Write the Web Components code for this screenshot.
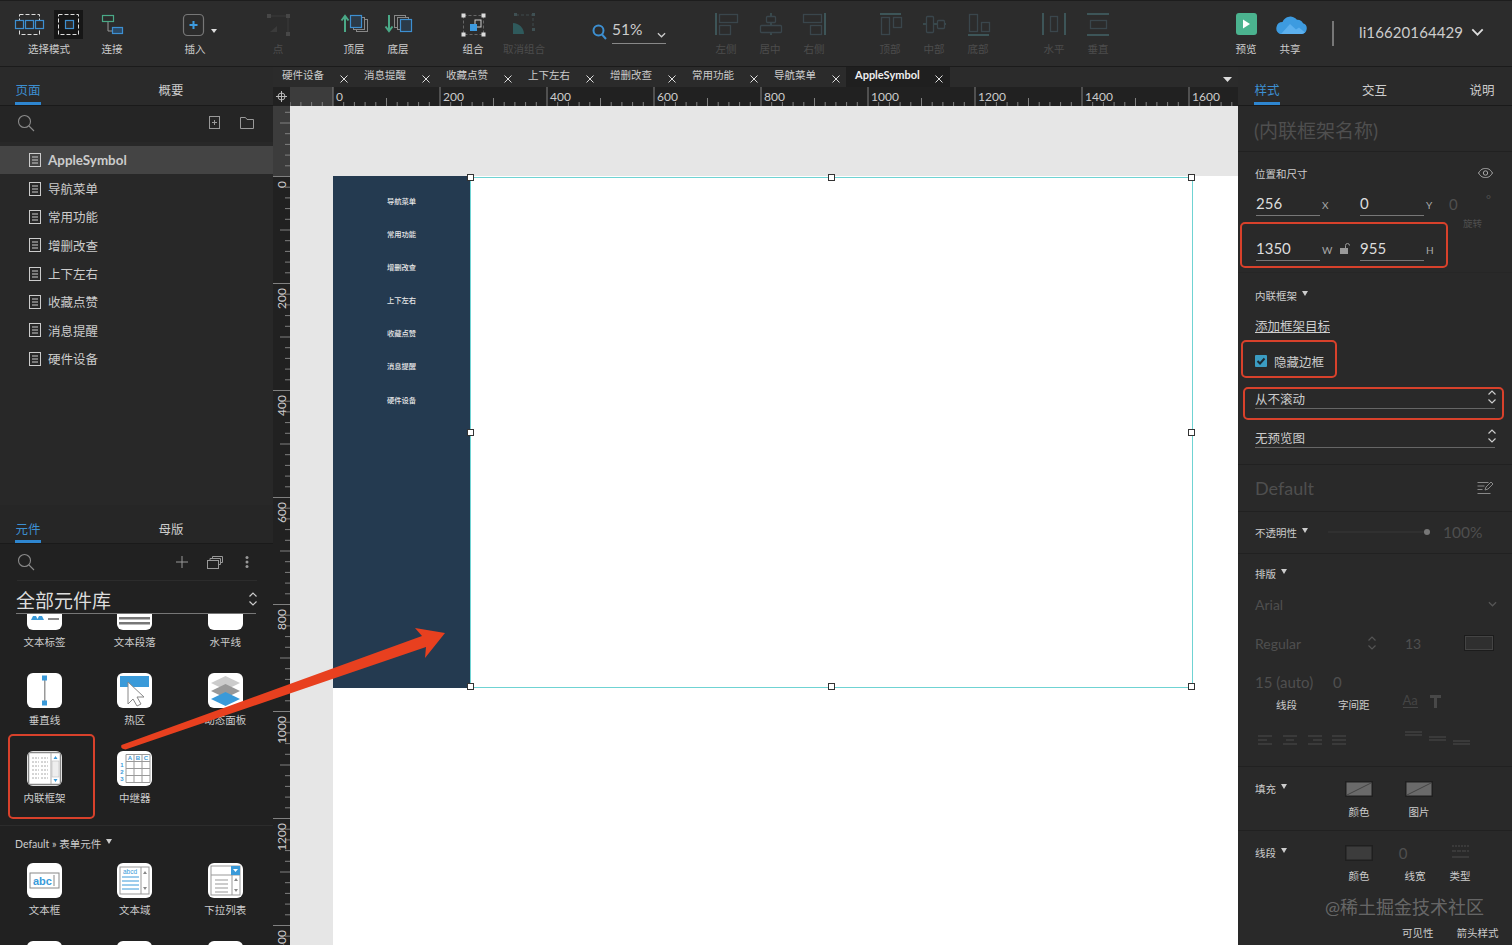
<!DOCTYPE html>
<html lang="zh">
<head>
<meta charset="utf-8">
<title>AppleSymbol</title>
<style>
  html, body { margin: 0; height: 100%; background: #222; overflow: hidden; }
</style>
</head>
<body>
<axure-app>
  <top-bar slot="top"></top-bar>
  <div slot="left" style="display:contents">
    <page-panel></page-panel>
    <lib-panel></lib-panel>
  </div>
  <editor-area slot="center"></editor-area>
  <style-panel slot="right"></style-panel>
</axure-app>
<annotation-layer></annotation-layer>

<script>
const SANS = '"Lato", "Noto Sans CJK SC", sans-serif';
const updown = '<svg width="10" height="16" viewBox="0 0 10 16" fill="none" stroke="#ccc" stroke-width="1.2"><path d="M1.5 5.5 5 2l3.5 3.5M1.5 10.5 5 14l3.5-3.5"/></svg>';
const chevron = (c = '#ccc', w = 10, h = 6) => `<svg width="${w}" height="${h}" viewBox="0 0 10 6" fill="none" stroke="${c}" stroke-width="1.4"><path d="M1 1l4 4 4-4"/></svg>`;
const caret = '<svg width="6" height="5" viewBox="0 0 6 5" style="margin-left:5px;margin-top:-3px"><path d="M0 0h6L3 5z" fill="#ccc"/></svg>';
const searchIcon = '<svg width="18" height="18" viewBox="0 0 18 18" fill="none" stroke="#8a8a8a" stroke-width="1.1"><circle cx="7.5" cy="7.5" r="6"/><path d="M12 12l5 5"/></svg>';

const DIM = '#3d5558', DIM2 = '#3a464c';
const TOOL_ICONS = {
  selectMode: `<rect x="44" y="0" width="29" height="29" fill="#161616"/>
    <g fill="none" stroke="#ddd" stroke-dasharray="4 2"><rect x="9.5" y="4.5" width="20" height="20"/><rect x="48.5" y="4.5" width="20" height="20"/></g>
    <g fill="#2b2b2b" stroke="#3d8fd1" stroke-width="1.2"><rect x="5.5" y="10.5" width="8" height="8"/><rect x="15.5" y="10.5" width="8" height="8"/><rect x="25.5" y="10.5" width="8" height="8"/><rect x="55.5" y="10.5" width="8" height="8"/></g>`,
  connect: `<path d="M18 11v10h5" fill="none" stroke="#999"/><rect x="12.5" y="5.5" width="11" height="6" fill="#2b2b2b" stroke="#4aa987" stroke-width="1.2"/><rect x="22.5" y="17.5" width="10" height="6" fill="#2b4a66" stroke="#3d8fd1" stroke-width="1.2"/>`,
  insert: `<rect x="10.5" y="4.5" width="20" height="21" rx="4" fill="none" stroke="#777" stroke-width="1.2"/><path d="M20.5 11v8M16.5 15h8" stroke="#3d9be0" stroke-width="2"/><path d="M38 19h6l-3 4z" fill="#ddd"/>`,
  point: `<path d="M13 6h19v18" fill="none" stroke="#3b3b3b"/><path d="M14 22l7-6v6z" fill="#3b3b3b"/><g fill="#474747"><rect x="11" y="4" width="4" height="4"/><rect x="30" y="4" width="4" height="4"/><rect x="30" y="22" width="4" height="4"/></g>`,
  layerTop: `<path d="M13 22V7M9.5 10.5 13 6l3.500 4.500" fill="none" stroke="#4aa987" stroke-width="2"/><g fill="#2b2b2b" stroke="#888"><rect x="24.500" y="9.500" width="11" height="12"/><rect x="21.500" y="7.500" width="11" height="12"/></g><rect x="18.500" y="5.500" width="11" height="12" fill="#2b3a48" stroke="#3d8fd1" stroke-width="1.2"/>`,
  layerBottom: `<path d="M13 5v15M9.500 16.500 13 21l3.500-4.500" fill="none" stroke="#4aa987" stroke-width="2"/><g fill="#2b2b2b" stroke="#888"><rect x="18.500" y="5.500" width="11" height="12"/><rect x="21.500" y="7.500" width="11" height="12"/></g><rect x="24.500" y="9.500" width="11" height="12" fill="#2b3a48" stroke="#3d8fd1" stroke-width="1.2"/>`,
  group: `<rect x="12.500" y="5.500" width="20" height="19" fill="none" stroke="#666" stroke-dasharray="3 2"/><rect x="24" y="10" width="6" height="7" fill="none" stroke="#ccc"/><rect x="19" y="14" width="7" height="7" fill="#3d9be0"/><g fill="#ddd"><rect x="10.500" y="3.500" width="4" height="4"/><rect x="30.500" y="3.500" width="4" height="4"/><rect x="10.500" y="22.500" width="4" height="4"/><rect x="30.500" y="22.500" width="4" height="4"/></g>`,
  ungroup: `<path d="M11 24V13c6 0 11 5 11 11z" fill="#2f5a5c"/><path d="M14 5h17v14" fill="none" stroke="#3f4a4c" stroke-dasharray="3 2"/><g fill="#3f5053"><rect x="12" y="3" width="3" height="3"/><rect x="30" y="3" width="3" height="3"/><rect x="30" y="18" width="3" height="3"/></g>`,
  alignLeft: `<path d="M12 3v22" stroke="${DIM}" stroke-width="2"/><g fill="none" stroke="${DIM2}" stroke-width="1.3"><rect x="15.500" y="4.500" width="18" height="8"/><rect x="15.500" y="15.500" width="11" height="9"/></g>`,
  alignCenter: `<path d="M23 3v22" stroke="${DIM}" stroke-width="1.500"/><g fill="#2b2b2b" stroke="${DIM2}" stroke-width="1.3"><rect x="18.500" y="6.500" width="9" height="6" rx="1"/><rect x="12.500" y="15.500" width="21" height="7" rx="1"/></g>`,
  alignRight: `<path d="M33 3v22" stroke="${DIM}" stroke-width="2"/><g fill="none" stroke="${DIM2}" stroke-width="1.3"><rect x="11.500" y="4.500" width="18" height="8"/><rect x="18.500" y="15.500" width="11" height="9"/></g>`,
  alignTop: `<path d="M12 4h21" stroke="${DIM}" stroke-width="2"/><g fill="none" stroke="${DIM2}" stroke-width="1.3"><rect x="13.500" y="7.500" width="8" height="17"/><rect x="25.500" y="7.500" width="8" height="10"/></g>`,
  alignMiddle: `<path d="M11 14h23" stroke="${DIM}" stroke-width="1.500"/><g fill="#2b2b2b" stroke="${DIM2}" stroke-width="1.3"><rect x="14.500" y="6.500" width="7" height="16" rx="1"/><rect x="25.500" y="10.500" width="7" height="8" rx="1"/></g>`,
  alignBottom: `<path d="M12 25h21" stroke="${DIM}" stroke-width="2"/><g fill="none" stroke="${DIM2}" stroke-width="1.3"><rect x="13.500" y="4.500" width="8" height="17"/><rect x="25.500" y="12.500" width="8" height="9"/></g>`,
  distH: `<path d="M11 3v22M33 3v22" stroke="${DIM}" stroke-width="2"/><rect x="18.500" y="6.500" width="7" height="15" fill="none" stroke="${DIM2}" stroke-width="1.3"/>`,
  distV: `<path d="M11 4h22M11 25h22" stroke="${DIM}" stroke-width="2"/><rect x="14.500" y="10.500" width="16" height="8" fill="none" stroke="${DIM2}" stroke-width="1.3"/>`,
  preview: `<rect x="12" y="3" width="21" height="22" rx="3" fill="#4bb38f"/><path d="M19 9.500v9l7-4.500z" fill="#fff"/>`,
  share: `<path d="M12 24h21a5.500 5.500 0 0 0 2-10.700 6 6 0 0 0-6-3.600A8.500 8.500 0 0 0 14.500 12 6.300 6.300 0 0 0 12 24z" fill="#3d9be0"/><path d="M13 24l9-10 6 5.500 3-2 6 5-3 1.500z" fill="#5cb0ee"/>`
};

const BLUE = '#3a9ad9';
const LIB_ICONS = {
  label: `<path d="M6 21h3l2 4H4zM12 21h3l2 4h-7z" fill="${BLUE}"/><rect x="21" y="23" width="11" height="2" fill="#888"/>`,
  para: `<rect x="2" y="22" width="31" height="2.500" fill="#777"/><rect x="2" y="27" width="31" height="2.500" fill="#777"/>`,
  hline: ``,
  vline: `<rect x="17" y="6" width="1.500" height="23" fill="#999"/><rect x="15" y="2.500" width="5" height="5" fill="${BLUE}"/><rect x="15" y="27.500" width="5" height="5" fill="${BLUE}"/>`,
  hot: `<rect x="3" y="3" width="29" height="11" fill="${BLUE}"/><path d="M11 9v22l5-5 4 7 4-2-4-7h7z" fill="#fff" stroke="#888"/>`,
  dynamic: `<path d="M17.500 3 32 10l-14.500 7L3 10z" fill="#ccc"/><path d="M17.500 11 32 18l-14.500 7L3 18z" fill="#999"/><path d="M17.500 19 32 26l-14.500 7L3 26z" fill="${BLUE}"/>`,
  frame: `<rect x="1.500" y="1.500" width="32" height="32" fill="none" stroke="#888" stroke-width="1.500"/><path d="M24 2v31" stroke="#aaa"/><path d="M5 7h7M14 7h7M5 11h7M14 11h7M5 15h7M14 15h7M5 19h7M14 19h7M5 23h7M14 23h7M5 27h7M14 27h7" stroke="#aaa" stroke-dasharray="2 1"/><rect x="25" y="10" width="7" height="16" fill="#eee" stroke="#bbb" stroke-width=".6"/><path d="M26.500 8l2-3 2 3zM26.500 28l2 3 2-3z" fill="${BLUE}"/>`,
  repeater: `<path d="M9 3.500h24v28H9zM9 10.500h24M9 17.500h24M9 24.500h24M17 3.500v28M25 3.500v28" fill="none" stroke="#999"/><g font-family="Liberation Sans" font-size="6" font-weight="700" fill="${BLUE}" text-anchor="middle"><text x="13" y="9">A</text><text x="21" y="9">B</text><text x="29" y="9">C</text><text x="5" y="16">1</text><text x="5" y="23">2</text><text x="5" y="30">3</text></g>`,
  textbox: `<rect x="3" y="10" width="29" height="15" fill="none" stroke="#888"/><text x="6" y="21.500" font-family="Liberation Sans" font-size="11" font-weight="700" fill="${BLUE}">abc</text><path d="M27 12v11" stroke="#888"/>`,
  textarea: `<rect x="3" y="4" width="29" height="27" fill="none" stroke="#999"/><text x="6" y="11" font-family="Liberation Sans" font-size="6.500" fill="${BLUE}">abcd</text><path d="M5 14h17M5 18h17M5 22h17M5 26h17" stroke="${BLUE}"/><path d="M24 4v27" stroke="#999"/><path d="M26 11l2-3 2 3zM26 24l2 3 2-3z" fill="#888"/>`,
  dropdown: `<rect x="3" y="3" width="29" height="29" fill="none" stroke="#999"/><path d="M3 12h29M24 12v20" stroke="#999"/><rect x="23" y="3" width="9" height="9" fill="${BLUE}"/><path d="M25 6h5l-2.500 3z" fill="#fff"/><path d="M7 17h13M7 21h13M7 25h13M7 29h13" stroke="#999"/><path d="M26 18l2-3 2 3zM26 26l2 3 2-3z" fill="#888"/>`,
  blank: ``
};

class BaseEl extends HTMLElement {
  connectedCallback() {
    if (!this.shadowRoot) this.attachShadow({ mode: 'open' });
    this.shadowRoot.innerHTML = this.markup();
  }
}

class AxureApp extends BaseEl {
  markup() {
    return `<style>
      :host { display: grid; grid-template-columns: 273px 965px 274px; grid-template-rows: 67px 878px; width: 1512px; height: 945px; font-family: ${SANS}; color: #ccc; overflow: hidden; }
      .top { grid-column: 1 / 4; }
      .left { display: flex; flex-direction: column; min-height: 0; }
    </style>
    <div class="top"><slot name="top"></slot></div>
    <div class="left"><slot name="left"></slot></div>
    <slot name="center"></slot>
    <slot name="right"></slot>`;
  }
}

class ToolBtn extends BaseEl {
  markup() {
    const w = this.getAttribute('w') || 44;
    const dim = this.hasAttribute('dim');
    return `<style>
      :host { display: flex; flex-direction: column; align-items: center; width: ${w}px; flex: none; }
      svg { display: block; }
      span { font-size: 10.5px; line-height: 14px; margin-top: 2px; white-space: nowrap; color: ${dim ? '#4c4c4c' : '#ccc'}; }
    </style>
    <svg width="${w}" height="30" viewBox="0 0 ${w} 30">${TOOL_ICONS[this.getAttribute('icon')]}</svg>
    <span>${this.getAttribute('label')}</span>`;
  }
}

class ZoomBox extends BaseEl {
  markup() {
    return `<style>
      :host { display: flex; width: 74px; flex: none; align-items: flex-start; padding-top: 13px; }
      .val { display: flex; justify-content: space-between; align-items: center; width: 54px; height: 20px; margin-left: 5px; border-bottom: 1px solid #888; font-size: 15.5px; color: #ccc; }
      .val span { margin-top: -8px; }
      .val svg { margin-top: 3px; }
      svg.mag { margin-top: 1px; }
    </style>
    <svg class="mag" width="15" height="16" viewBox="0 0 15 16" fill="none" stroke="#3d8fd1" stroke-width="2"><circle cx="6.500" cy="6.500" r="5"/><path d="M10 10.500l4 4.500"/></svg>
    <div class="val"><span>51%</span>${chevron('#ccc', 9, 6)}</div>`;
  }
}

class TopBar extends BaseEl {
  markup() {
    const t = (icon, label, ml = 0, extra = '') => `<tool-btn icon="${icon}" label="${label}" style="margin-left:${ml}px" ${extra}></tool-btn>`;
    return `<style>
      :host { display: flex; height: 67px; box-sizing: border-box; padding: 9px 0 0 10px; background: #2c2c2c; border-top: 1px solid #1d1d1d; border-bottom: 1px solid #1b1b1b; }
      .sep { width: 2px; height: 25px; background: #777; margin: 11px 0 0 20px; flex: none; }
      .user { display: flex; align-items: center; gap: 8px; height: 25px; margin: 9px 0 0 25px; font-size: 15px; letter-spacing: .1px; color: #ccc; white-space: nowrap; }
    </style>
    ${t('selectMode', '选择模式', 0, 'w="78"')}
    ${t('connect', '连接', 2)}
    ${t('insert', '插入', 39)}
    ${t('point', '点', 39, 'dim')}
    ${t('layerTop', '顶层', 32)}
    ${t('layerBottom', '底层')}
    ${t('group', '组合', 31)}
    ${t('ungroup', '取消组合', 7, 'dim')}
    <zoom-box style="margin-left:46px"></zoom-box>
    ${t('alignLeft', '左侧', 38, 'dim')}
    ${t('alignCenter', '居中', 0, 'dim')}
    ${t('alignRight', '右侧', 0, 'dim')}
    ${t('alignTop', '顶部', 32, 'dim')}
    ${t('alignMiddle', '中部', 0, 'dim')}
    ${t('alignBottom', '底部', 0, 'dim')}
    ${t('distH', '水平', 32, 'dim')}
    ${t('distV', '垂直', 0, 'dim')}
    ${t('preview', '预览', 104)}
    ${t('share', '共享')}
    <div class="sep"></div>
    <div class="user"><span>li16620164429</span>${chevron('#ddd', 13, 8)}</div>`;
  }
}

class PanelTabs extends BaseEl {
  markup() {
    return `<style>
      :host { display: flex; gap: var(--gap, 117px); height: 39px; flex: none; box-sizing: border-box; padding-left: var(--pad, 15px); border-bottom: 1px solid #1a1a1a; background: var(--tab-bg, #2a2a2a); }
    </style><slot></slot>`;
  }
}

class PanelTab extends BaseEl {
  markup() {
    const on = this.hasAttribute('active');
    return `<style>
      :host { display: block; box-sizing: border-box; height: 38px; width: 26px; padding-top: var(--tab-pt, 16px); font-size: 12.5px; line-height: 16px; text-align: center; white-space: nowrap; color: ${on ? '#3d8fd1' : '#ccc'}; border-bottom: 3px solid ${on ? '#2e86d0' : 'transparent'}; }
    </style><slot></slot>`;
  }
}

class PageRow extends BaseEl {
  markup() {
    const on = this.hasAttribute('active');
    return `<style>
      :host { display: flex; align-items: center; gap: 7px; height: 28.350px; padding-left: 29px; font-size: ${on ? '13.400px' : '12.500px'}; font-weight: ${on ? 700 : 400}; color: #ccc; background: ${on ? '#444' : 'transparent'}; }
    </style>
    <svg width="12" height="14" viewBox="0 0 12 14" fill="none" stroke="#ccc"><rect x=".5" y=".5" width="11" height="13"/><path d="M3 4h6M3 7h6M3 10h6"/></svg>
    <slot></slot>`;
  }
}

class PagePanel extends BaseEl {
  markup() {
    const names = ['导航菜单', '常用功能', '增删改查', '上下左右', '收藏点赞', '消息提醒', '硬件设备'];
    return `<style>
      :host { display: flex; flex-direction: column; height: 438px; flex: none; background: #282828; }
      .search { display: flex; align-items: center; height: 36px; box-sizing: border-box; padding: 0 19px 3px 17px; background: #252525; flex: none; }
      .search .sp { flex: 1; }
      .list { padding-top: 4px; }
    </style>
    <panel-tabs><panel-tab active>页面</panel-tab><panel-tab>概要</panel-tab></panel-tabs>
    <div class="search">
      ${searchIcon}<span class="sp"></span>
      <svg width="11" height="13" viewBox="0 0 11 13" fill="none" stroke="#999"><rect x=".5" y=".5" width="10" height="12"/><path d="M3 6.500h5M5.500 4v5"/></svg>
      <svg width="14" height="12" viewBox="0 0 14 12" fill="none" stroke="#999" style="margin-left:20px"><path d="M.5 11.500V.5h5l1.500 2h6.500v9z"/></svg>
    </div>
    <div class="list">
      <page-row active>AppleSymbol</page-row>
      ${names.map(n => `<page-row>${n}</page-row>`).join('')}
    </div>`;
  }
}

class LibItem extends BaseEl {
  markup() {
    return `<style>
      :host { display: flex; flex-direction: column; align-items: center; height: 78px; }
      svg { display: block; background: #fff; border-radius: 6px; flex: none; }
      span { font-size: 10.500px; line-height: 14px; margin-top: 5px; color: #ccc; white-space: nowrap; }
    </style>
    <svg width="35" height="35" viewBox="0 0 35 35">${LIB_ICONS[this.getAttribute('icon')] || ''}</svg>
    <span>${this.getAttribute('label') || ''}</span>`;
  }
}

class LibPanel extends BaseEl {
  markup() {
    return `<style>
      :host { display: flex; flex-direction: column; height: 440px; flex: none; background: #212121; }
      panel-tabs { --tab-bg: #262626; --tab-pt: 17px; }
      .tools { display: flex; align-items: center; height: 36px; margin: 0 16px 0 17px; padding-right: 8px; border-bottom: 1px solid #2c2c2c; flex: none; }
      .tools .sp { flex: 1; }
      .lib { display: flex; align-items: center; justify-content: space-between; height: 33px; margin: 0 17px 0 16px; box-sizing: border-box; padding: 4px 0 0; border-bottom: 1px solid #777; font-size: 19px; color: #ddd; flex: none; }
      .lib svg { margin-right: -2px; }
      .scroll { flex: 1; overflow: hidden; min-height: 0; }
      .grid { display: grid; grid-template-columns: repeat(3, 90.300px); margin-left: -.6px; }
      .first { margin-top: -19px; margin-bottom: -4px; }
      .head { display: flex; align-items: center; height: 34px; margin-bottom: 3px; padding-left: 15px; border-top: 1px solid #2c2c2c; font-size: 10.500px; color: #ccc; }
    </style>
    <panel-tabs><panel-tab active>元件</panel-tab><panel-tab>母版</panel-tab></panel-tabs>
    <div class="tools">
      ${searchIcon}<span class="sp"></span>
      <svg width="12" height="12" viewBox="0 0 12 12" stroke="#999" fill="none"><path d="M6 0v12M0 6h12"/></svg>
      <svg width="16" height="13" viewBox="0 0 16 13" stroke="#999" fill="none" style="margin-left:19px"><rect x=".5" y="4.500" width="11" height="8"/><path d="M3 4.500V2.500h10.500v6H11.500M5.500 2.500V.5h10v6h-2"/></svg>
      <svg width="4" height="12" viewBox="0 0 4 12" fill="#999" style="margin-left:22px"><circle cx="2" cy="1.500" r="1.500"/><circle cx="2" cy="6" r="1.500"/><circle cx="2" cy="10.500" r="1.500"/></svg>
    </div>
    <div class="lib"><span>全部元件库</span>${updown}</div>
    <div class="scroll">
      <div class="grid first">
        <lib-item icon="label" label="文本标签"></lib-item>
        <lib-item icon="para" label="文本段落"></lib-item>
        <lib-item icon="hline" label="水平线"></lib-item>
        <lib-item icon="vline" label="垂直线"></lib-item>
        <lib-item icon="hot" label="热区"></lib-item>
        <lib-item icon="dynamic" label="动态面板"></lib-item>
        <lib-item icon="frame" label="内联框架"></lib-item>
        <lib-item icon="repeater" label="中继器"></lib-item>
      </div>
      <div class="head"><span>Default » 表单元件</span>${caret}</div>
      <div class="grid">
        <lib-item icon="textbox" label="文本框"></lib-item>
        <lib-item icon="textarea" label="文本域"></lib-item>
        <lib-item icon="dropdown" label="下拉列表"></lib-item>
        <lib-item icon="blank"></lib-item>
        <lib-item icon="blank"></lib-item>
        <lib-item icon="blank"></lib-item>
      </div>
    </div>`;
  }
}

class DocTab extends BaseEl {
  markup() {
    const on = this.hasAttribute('active');
    return `<style>
      :host { display: flex; height: 20px; width: var(--w, 82px); flex: none; box-sizing: border-box; padding-left: 9px; font-size: ${on ? '11px' : '10.500px'}; color: ${on ? '#eee' : '#ccc'}; font-weight: ${on ? 700 : 400}; background: ${on ? '#1f1f1f' : 'transparent'}; }
      span { line-height: 16px; white-space: nowrap; }
      svg { margin: 8px 0 0 ${on ? 15 : 16}px; flex: none; }
    </style>
    <span><slot></slot></span>
    <svg width="8" height="8" viewBox="0 0 8 8" stroke="#ddd"><path d="M.5.500l7 7M7.500.500l-7 7"/></svg>`;
  }
}

class HRuler extends BaseEl {
  markup() {
    const step = 107, sub = step / 10, zero = 43;
    let ticks = '', labels = '';
    for (let i = -4; i <= 90; i++) {
      const x = zero + i * sub;
      if (x < 0 || x > 948) continue;
      if (i % 10 === 0) {
        ticks += `M${x.toFixed(1)} 0V19`;
        if (i >= 0) labels += `<span style="left:${(x + 3).toFixed(1)}px">${i * 20}</span>`;
      } else {
        ticks += `M${x.toFixed(1)} ${i % 5 === 0 ? 11 : 15}V19`;
      }
    }
    return `<style>
      :host { display: flex; height: 19px; flex: none; background: #212121; }
      .corner { width: 17px; display: flex; align-items: center; justify-content: center; flex: none; }
      .track { position: relative; flex: 1; overflow: hidden; }
      .shade { position: absolute; left: 0; top: 0; bottom: 0; width: 43px; background: #3c3c3c; }
      svg.t { position: absolute; left: 0; top: 0; }
      span { position: absolute; top: 2px; font-size: 12px; line-height: 16px; color: #ccc; }
    </style>
    <div class="corner"><svg width="11" height="11" viewBox="0 0 11 11" fill="none" stroke="#bbb"><circle cx="5.500" cy="5.500" r="3.500"/><path d="M5.500 0v11M0 5.500h11"/></svg></div>
    <div class="track"><div class="shade"></div>
      <svg class="t" width="948" height="19" fill="none" stroke="#808080"><path d="${ticks}"/></svg>${labels}</div>`;
  }
}

class VRuler extends BaseEl {
  markup() {
    const step = 107, sub = step / 10, zero = 70.5;
    let ticks = '', labels = '';
    for (let i = -6; i <= 78; i++) {
      const y = zero + i * sub;
      if (y < 0 || y > 839) continue;
      if (i % 10 === 0) {
        ticks += `M0 ${y.toFixed(1)}H17`;
        if (i >= 0) labels += `<span style="top:${(y + 4).toFixed(1)}px">${i * 20}</span>`;
      } else {
        ticks += `M${i % 5 === 0 ? 7 : 12} ${y.toFixed(1)}H17`;
      }
    }
    return `<style>
      :host { display: block; position: relative; width: 17px; flex: none; background: #212121; overflow: hidden; }
      .shade { position: absolute; left: 0; top: 0; right: 0; height: 70px; background: #3c3c3c; }
      svg { position: absolute; left: 0; top: 0; }
      span { position: absolute; left: 1px; writing-mode: vertical-rl; transform: rotate(180deg); font-size: 12px; line-height: 15px; color: #ccc; }
    </style>
    <div class="shade"></div>
    <svg width="17" height="839" fill="none" stroke="#808080"><path d="${ticks}"/></svg>${labels}`;
  }
}

class SelectFrame extends BaseEl {
  markup() {
    const spots = [[0, 0], [50, 0], [100, 0], [0, 50], [100, 50], [0, 100], [50, 100], [100, 100]];
    return `<style>
      :host { display: block; position: relative; width: 723px; height: 511px; margin-top: 1px; box-sizing: border-box; border: 1px solid #6fd3d3; background: #fff; flex: none; }
      i { position: absolute; width: 5px; height: 5px; margin: -4px 0 0 -4px; background: #fff; border: 1px solid #333; }
    </style>
    ${spots.map(([x, y]) => `<i style="left:${x}%;top:${y}%"></i>`).join('')}`;
  }
}

class NavPreview extends BaseEl {
  markup() {
    const names = ['导航菜单', '常用功能', '增删改查', '上下左右', '收藏点赞', '消息提醒', '硬件设备'];
    return `<style>
      :host { display: flex; flex-direction: column; align-items: center; box-sizing: border-box; width: 137px; height: 512px; padding: 8.500px 0 0 0; background: #243a50; flex: none; }
      div { height: 33.200px; line-height: 33.200px; font-size: 7.300px; font-weight: 500; color: #e8e8e8; }
    </style>
    ${names.map(n => `<div>${n}</div>`).join('')}`;
  }
}

class CanvasView extends BaseEl {
  markup() {
    return `<style>
      :host { display: block; flex: 1; box-sizing: border-box; padding: 70px 0 0 43px; background: #e6e6e6; overflow: hidden; }
      .page { display: flex; align-items: flex-start; height: 100%; background: #fff; }
    </style>
    <div class="page"><nav-preview></nav-preview><select-frame></select-frame></div>`;
  }
}

class EditorArea extends BaseEl {
  markup() {
    const tabs = ['硬件设备', '消息提醒', '收藏点赞', '上下左右', '增删改查', '常用功能', '导航菜单'];
    return `<style>
      :host { display: flex; flex-direction: column; width: 965px; height: 878px; background: #2b2b2b; }
      .tabs { display: flex; height: 20px; flex: none; align-items: flex-start; }
      .tabs .sp { flex: 1; }
      .tabs svg { margin: 10px 6px 0 0; }
      .body { display: flex; flex: 1; min-height: 0; }
    </style>
    <div class="tabs">
      ${tabs.map(n => `<doc-tab>${n}</doc-tab>`).join('')}
      <doc-tab active style="--w:104px;margin-left:-1px">AppleSymbol</doc-tab>
      <span class="sp"></span>
      <svg width="9" height="5" viewBox="0 0 9 5"><path d="M0 0h9L4.500 5z" fill="#ddd"/></svg>
    </div>
    <h-ruler></h-ruler>
    <div class="body"><v-ruler></v-ruler><canvas-view></canvas-view></div>`;
  }
}

class NumField extends BaseEl {
  markup() {
    const dim = this.hasAttribute('dim');
    return `<style>
      :host { display: block; box-sizing: border-box; width: 64px; height: 24px; border-bottom: 1px solid #777; font-size: 15px; line-height: 23px; color: ${dim ? '#555' : '#ddd'}; flex: none; }
    </style><slot></slot>`;
  }
}

class SelectField extends BaseEl {
  markup() {
    return `<style>
      :host { display: flex; justify-content: space-between; align-items: center; box-sizing: border-box; height: 21px; width: 240px; padding-right: 0; border-bottom: 1px solid #666; font-size: 12.500px; color: #ccc; flex: none; }
      svg { margin-right: -2px; margin-top: -3px; }
    </style><slot></slot>${updown}`;
  }
}

class StylePanel extends BaseEl {
  markup() {
    const swatch = (mark = true, c = '#6a6a6a') => `<svg width="28" height="16" viewBox="0 0 28 16" style="margin-top:2px"><rect width="28" height="16" fill="#1f1f1f"/><rect x="1.500" y="1.500" width="25" height="13" fill="${mark ? c : '#3c3c3c'}"/>${mark ? '<path d="M2 14 26 2" stroke="#444"/>' : ''}</svg>`;
    return `<style>
      :host { display: flex; flex-direction: column; width: 274px; height: 878px; background: #292929; font-size: 10.500px; color: #ccc; }
      panel-tabs { --gap: 81.500px; --pad: 16px; }
      .sec { box-sizing: border-box; flex: none; padding-left: 17px; border-bottom: 1px solid #212121; }
      .row { display: flex; align-items: center; height: 20px; white-space: nowrap; }
      .dim { color: #4f4f4f; }
      .big { font-size: 18px; }
      .unit { width: 40px; flex: none; font-size: 10px; color: #aaa; padding-left: 2px; box-sizing: border-box; padding-top: 2px; display: flex; align-items: center; gap: 8px; }
      .sp { flex: 1; }
      .cols { display: grid; grid-template-columns: 74px 60px 60px; align-items: center; }
      .cols2 { display: grid; grid-template-columns: 74px 60px 52px 38px; align-items: center; }
      .c { display: flex; justify-content: center; }
      .aa { font-size: 13px; line-height: 13px; color: #444; border-bottom: 1px solid #444; margin: -6px 0 0 33px; }
    </style>
    <panel-tabs><panel-tab active>样式</panel-tab><panel-tab>交互</panel-tab><panel-tab>说明</panel-tab></panel-tabs>

    <div class="sec" style="height:46px;padding-left:16px"><div class="row dim" style="font-size:19px;height:46px;padding-top:1px;box-sizing:border-box">(内联框架名称)</div></div>

    <div class="sec" style="height:121px;padding-top:11px;border-bottom-color:#262626">
      <div class="row" style="height:20px;padding-right:19px"><span>位置和尺寸</span><span class="sp"></span>
        <svg width="15" height="10" viewBox="0 0 15 10" fill="none" stroke="#aaa"><path d="M.5 5C3 1 5 .5 7.500.5S12 1 14.500 5C12 9 10 9.500 7.500 9.500S3 9 .5 5z"/><circle cx="7.500" cy="5" r="2.200"/></svg></div>
      <div class="row" style="height:24px;margin-top:9px;margin-left:1px">
        <num-field>256</num-field><span class="unit">X</span><num-field>0</num-field><span class="unit" style="width:25px">Y</span><span class="dim" style="font-size:15px">0</span>
        <span class="sp"></span><span class="dim" style="margin:-10px 21px 0 0;font-size:12px">°</span></div>
      <div class="row" style="height:24px;margin-top:21px;margin-left:1px">
        <num-field>1350</num-field><span class="unit">W<svg width="10" height="11" viewBox="0 0 10 11" style="margin-top:-3px"><rect y="5" width="8" height="6" fill="#999"/><path d="M5.500 5V2.500a2 2 0 0 1 4 0" fill="none" stroke="#999"/></svg></span><num-field>955</num-field><span class="unit" style="width:25px">H</span>
        <span class="dim" style="margin:-52px 0 0 14px;font-size:9.500px">旋转</span></div>
    </div>

    <div class="sec" style="height:192px;padding-top:12px">
      <div class="row"><span>内联框架</span>${caret}</div>
      <div class="row" style="margin-top:10px;font-size:12.500px;text-decoration:underline">添加框架目标</div>
      <div class="row" style="margin-top:16px;font-size:12.500px;gap:7px">
        <svg width="12" height="12" viewBox="0 0 12 12"><rect width="12" height="12" rx="1" fill="#3b9cc2"/><path d="M2.500 6l2.500 2.500 4.500-5" fill="none" stroke="#1c2a33" stroke-width="2"/></svg><span>隐藏边框</span></div>
      <select-field style="margin-top:17px">从不滚动</select-field>
      <select-field style="margin-top:18px">无预览图</select-field>
    </div>

    <div class="sec" style="height:47px;padding-right:19px"><div class="row" style="height:46px"><span class="dim big">Default</span><span class="sp"></span>
      <svg width="16" height="14" viewBox="0 0 16 14" fill="none" stroke="#888"><path d="M.5 1.500h11M.5 5h7M.5 8.500h5M.5 12.500h13M8 9l1-3 5-5 2 2-5 5z"/></svg></div></div>

    <div class="sec" style="height:42px"><div class="row" style="height:40px"><span>不透明性</span>${caret}
      <svg width="102" height="8" viewBox="0 0 102 8" style="margin-left:20px"><path d="M0 4h98" stroke="#383838"/><circle cx="99" cy="4" r="3" fill="#777"/></svg>
      <span class="dim" style="font-size:15.500px;margin-left:13px">100%</span></div></div>

    <div class="sec" style="height:213px;padding-top:9px">
      <div class="row"><span>排版</span>${caret}</div>
      <div class="row dim" style="margin-top:11px;font-size:14px;padding-right:15px"><span>Arial</span><span class="sp"></span>${chevron('#555', 9, 6)}</div>
      <div class="row dim" style="margin-top:19px;font-size:14px"><span style="width:112px">Regular</span>
        <svg width="10" height="16" viewBox="0 0 10 16" fill="none" stroke="#555" stroke-width="1.200"><path d="M1.500 5.500 5 2l3.500 3.500M1.500 10.500 5 14l3.500-3.500"/></svg>
        <span style="margin-left:28px">13</span>
        <svg width="30" height="16" viewBox="0 0 30 16" style="margin-left:43px"><rect x=".5" y=".5" width="29" height="15" fill="#2f2f2f" stroke="#1c1c1c"/><rect x="1.500" y="1.500" width="27" height="13" fill="none" stroke="#444"/></svg></div>
      <div class="row dim" style="margin-top:19px;font-size:15px"><span style="width:78px">15 (auto)</span><span>0</span></div>
      <div class="row" style="margin-top:2px"><span style="width:42px;text-align:right">线段</span><span style="margin-left:41px">字间距</span>
        <span class="aa">Aa</span>
        <svg width="14" height="16" viewBox="0 0 14 16" style="margin:-6px 0 0 11px"><path d="M1 2h11v3H8v10H5V5H1z" fill="#484848"/></svg></div>
      <div class="row" style="margin-top:15px;margin-left:3px">
        <svg width="214" height="16" viewBox="0 0 214 16" fill="none" stroke="#4d4d4d"><path d="M0 5h14M0 9h9M0 13h14M25 5h14M28 9h8M25 13h14M50 5h14M55 9h9M50 13h14M74 5h14M74 9h14M74 13h14M147 1h17M147 4h17M171 6h17M171 9h17M195 10h17M195 13h17"/></svg></div>
    </div>

    <div class="sec" style="height:64px;padding-top:10px">
      <div class="cols"><div class="row" style="height:22px"><span>填充</span>${caret}</div><div class="c">${swatch()}</div><div class="c">${swatch()}</div></div>
      <div class="cols" style="margin-top:5px"><span></span><div class="c">颜色</div><div class="c">图片</div></div>
    </div>

    <div class="sec" style="flex:1;padding-top:11px;border:0">
      <div class="cols2"><div class="row" style="height:20px"><span>线段</span>${caret}</div><div class="c">${swatch(false)}</div><div class="c dim" style="font-size:15px;padding:2px 24px 0 0">0</div>
        <div class="c"><svg width="17" height="14" viewBox="0 0 17 14" fill="none" stroke="#4d4d4d"><path d="M0 1h17" stroke-dasharray="2 1"/><path d="M0 6h17" stroke-dasharray="4 1"/><path d="M0 12h17"/></svg></div></div>
      <div class="cols2" style="margin-top:6px"><span></span><div class="c">颜色</div><div class="c">线宽</div><div class="c">类型</div></div>
      <div class="row" style="margin-top:39px;padding-left:147px;gap:23px"><span>可见性</span><span>箭头样式</span></div>
    </div>`;
  }
}

class RedMark extends BaseEl {
  markup() {
    return `<style>
      :host { display: block; position: absolute; box-sizing: border-box; border: 2px solid #d8412b; border-radius: 5px; }
    </style>`;
  }
}

class AnnotationLayer extends BaseEl {
  markup() {
    return `<style>
      :host { display: block; position: absolute; left: 0; top: 0; width: 1512px; height: 945px; pointer-events: none; overflow: hidden; }
      svg { position: absolute; left: 0; top: 0; }
      .mark { position: absolute; right: 28px; top: 895px; font: 18px/24px ${SANS}; color: rgba(255,255,255,.3); white-space: nowrap; }
    </style>
    <red-mark style="left:8px;top:734px;width:87px;height:85px"></red-mark>
    <red-mark style="left:1240px;top:222px;width:208px;height:46px"></red-mark>
    <red-mark style="left:1241px;top:340px;width:96px;height:38px"></red-mark>
    <red-mark style="left:1243px;top:387px;width:261px;height:33px"></red-mark>
    <svg width="1512" height="945" viewBox="0 0 1512 945"><path d="M121.500 745 422 636 415 628 445 633 425 658 426 647 125.500 749.500Q120 749 121.500 745z" fill="#e8401f"/></svg>
    <div class="mark">@稀土掘金技术社区</div>`;
  }
}

const defs = {
  'axure-app': AxureApp, 'tool-btn': ToolBtn, 'zoom-box': ZoomBox, 'top-bar': TopBar,
  'panel-tabs': PanelTabs, 'panel-tab': PanelTab, 'page-row': PageRow, 'page-panel': PagePanel,
  'lib-item': LibItem, 'lib-panel': LibPanel, 'doc-tab': DocTab, 'h-ruler': HRuler, 'v-ruler': VRuler,
  'select-frame': SelectFrame, 'nav-preview': NavPreview, 'canvas-view': CanvasView, 'editor-area': EditorArea,
  'num-field': NumField, 'select-field': SelectField, 'style-panel': StylePanel,
  'red-mark': RedMark, 'annotation-layer': AnnotationLayer
};
Object.keys(defs).forEach(k => customElements.define(k, defs[k]));
</script>
</body>
</html>
